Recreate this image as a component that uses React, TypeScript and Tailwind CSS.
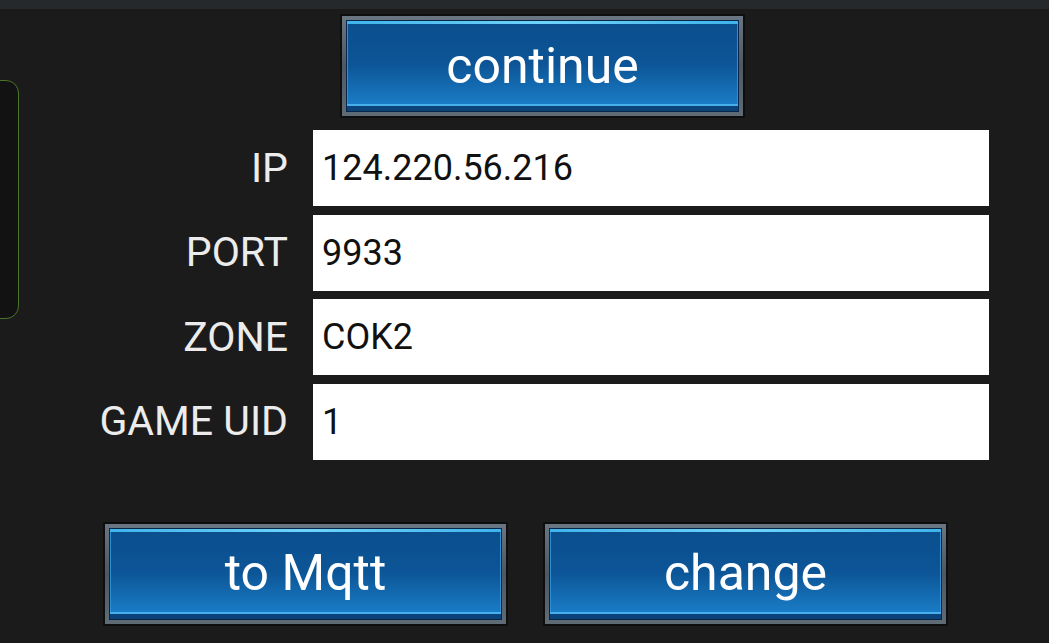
import React from 'react';

const FONT = { fontFamily: 'Roboto, "Noto Sans", sans-serif' };

function GameButton({ label, className = '' }: { label: string; className?: string }) {
  return (
    <div className={`h-[104px] w-[405px] bg-[#0e0e0e] p-[2px] ${className}`}>
      <div className="h-full w-full bg-gradient-to-b from-[#6a7681] via-[#4d5862] to-[#5f6b75] p-[4px]">
        <div className="flex h-full w-full flex-col border border-[#08264a] bg-[#0a3f73]">
          <div className="h-[3px] bg-gradient-to-r from-[#3fb4ea] via-[#6fd4fa] to-[#3fb4ea]" />
          <div className="flex flex-1 items-center justify-center border-x border-x-[#2f8fd0] bg-gradient-to-b from-[#0b4f8e] via-[#0c5596] to-[#1a7cc6]">
            <span className="pt-[3px] text-[50px] leading-none text-white">{label}</span>
          </div>
          <div className="h-[2px] bg-[#47b0ec]" />
          <div className="h-[5px] bg-[#0b4279]" />
        </div>
      </div>
    </div>
  );
}

const FIELDS: { label: string; value: string }[] = [
  { label: 'IP', value: '124.220.56.216' },
  { label: 'PORT', value: '9933' },
  { label: 'ZONE', value: 'COK2' },
  { label: 'GAME UID', value: '1' },
];

export default function App() {
  return (
    <div className="relative flex h-[643px] w-[1049px] flex-col overflow-hidden bg-[#1b1b1b]" style={FONT}>
      <div className="h-[9px] bg-[#25292c]" />

      {/* side handle, mostly off screen */}
      <div className="absolute left-[-20px] top-[80px] h-[239px] w-[39px] rounded-[13px] border border-[#4a7428] bg-[#121212]" />

      <div className="mt-[5px] flex justify-center pl-[36px]">
        <GameButton label="continue" />
      </div>

      <div className="mt-[12px] flex flex-col gap-[8.5px]">
        {FIELDS.map((f) => (
          <div key={f.label} className="flex h-[76px] items-center">
            <div className="w-[289px] pr-[1px] text-right text-[41px] leading-none text-[#ececec]">{f.label}</div>
            <div className="ml-[24px] flex h-full w-[676px] items-center bg-white pl-[9px] text-[36px] leading-none text-[#111111]">
              {f.value}
            </div>
          </div>
        ))}
      </div>

      <div className="mt-[62px] flex justify-center gap-[35px] pl-[2px]">
        <GameButton label="to Mqtt" className="h-[103px]" />
        <GameButton label="change" className="h-[103px]" />
      </div>
    </div>
  );
}
